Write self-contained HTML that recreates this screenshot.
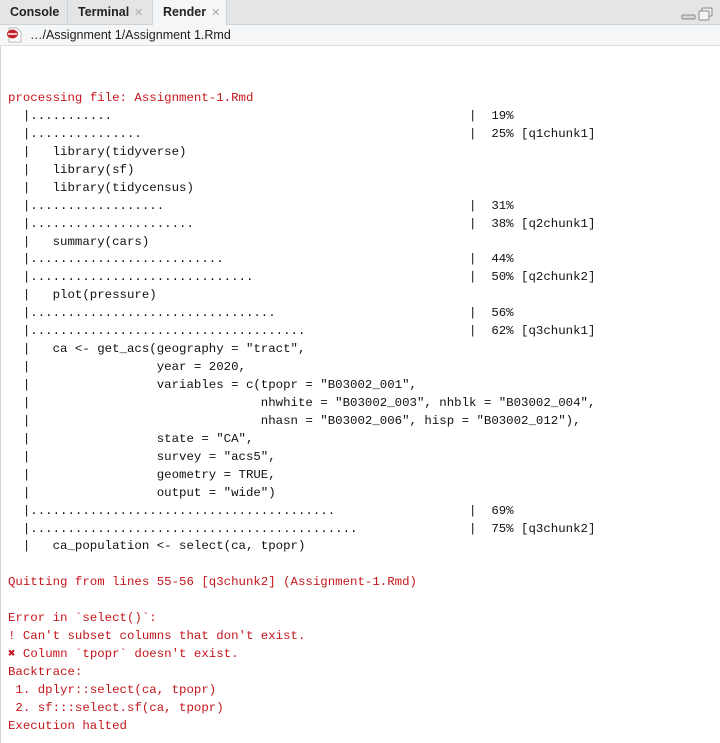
<!DOCTYPE html>
<html><head><meta charset="utf-8"><style>
html,body{margin:0;padding:0;width:720px;height:743px;overflow:hidden;background:#fff;font-family:"Liberation Sans",sans-serif;}
.tabs{position:absolute;left:0;top:0;width:720px;height:24px;background:#e3e5e7;border-bottom:1px solid #d0d3d6;}
.tab{position:absolute;top:0;height:24px;line-height:24px;font-size:12.5px;font-weight:bold;color:#222;box-sizing:border-box;padding-left:10px;border-right:1px solid #d0d3d6;}
.x{color:#aaa;font-weight:normal;font-size:11px;margin-left:5px}
.bar{position:absolute;left:0;top:25px;width:720px;height:20px;background:#f4f6f7;border-bottom:1px solid #dcdfe2;font-size:12.5px;color:#222;line-height:20px;}
.content{position:absolute;left:0;top:46px;width:719px;height:697px;border-left:1px solid #d6d6d6;}
pre{position:absolute;left:7px;top:44px;margin:0;font-family:"Liberation Mono",monospace;font-size:12.4px;line-height:17.93px;color:#111;}
.r{color:#c4161c}
</style></head><body>
<div class="tabs">
<div class="tab" style="left:0;width:68px;background:#e3e5e7">Console</div>
<div class="tab" style="left:68px;width:85px;background:#e3e5e7">Terminal<span class="x">✕</span></div>
<div class="tab" style="left:153px;width:74px;background:#f4f6f7;height:25px">Render<span class="x">✕</span></div>
<svg style="position:absolute;left:680px;top:7px" width="36" height="14" viewBox="0 0 36 14"><rect x="2" y="8" width="13" height="4" rx="1" fill="#d8d8d8" stroke="#888" stroke-width="1"/><rect x="22" y="1" width="10" height="8" rx="1" fill="#eee" stroke="#888"/><rect x="19" y="4" width="10" height="9" rx="1" fill="#f4f4f4" stroke="#888"/></svg>
</div>
<div class="bar"><svg style="position:absolute;left:6px;top:2px" width="17" height="16" viewBox="0 0 17 16"><path d="M3 1h8l4 4v10H3z" fill="#fff" stroke="#bbb"/><ellipse cx="6.5" cy="7" rx="5.5" ry="4.5" fill="#c0262b"/><rect x="2" y="6" width="9" height="2" fill="#f1c1c1"/></svg><span style="position:absolute;left:30px">…/Assignment 1/Assignment 1.Rmd</span></div>
<div class="content">
<pre><span class="r">processing file: Assignment-1.Rmd</span>
  |...........                                                |  19%
  |...............                                            |  25% [q1chunk1]
  |   library(tidyverse)
  |   library(sf)
  |   library(tidycensus)
  |..................                                         |  31%
  |......................                                     |  38% [q2chunk1]
  |   summary(cars)
  |..........................                                 |  44%
  |..............................                             |  50% [q2chunk2]
  |   plot(pressure)
  |.................................                          |  56%
  |.....................................                      |  62% [q3chunk1]
  |   ca &lt;- get_acs(geography = "tract",
  |                 year = 2020,
  |                 variables = c(tpopr = "B03002_001",
  |                               nhwhite = "B03002_003", nhblk = "B03002_004",
  |                               nhasn = "B03002_006", hisp = "B03002_012"),
  |                 state = "CA",
  |                 survey = "acs5",
  |                 geometry = TRUE,
  |                 output = "wide")
  |.........................................                  |  69%
  |............................................               |  75% [q3chunk2]
  |   ca_population &lt;- select(ca, tpopr)

<span class="r">Quitting from lines 55-56 [q3chunk2] (Assignment-1.Rmd)

Error in `select()`:
! Can't subset columns that don't exist.
✖ Column `tpopr` doesn't exist.
Backtrace:
 1. dplyr::select(ca, tpopr)
 2. sf:::select.sf(ca, tpopr)
Execution halted</span></pre>
</div>
</body></html>
